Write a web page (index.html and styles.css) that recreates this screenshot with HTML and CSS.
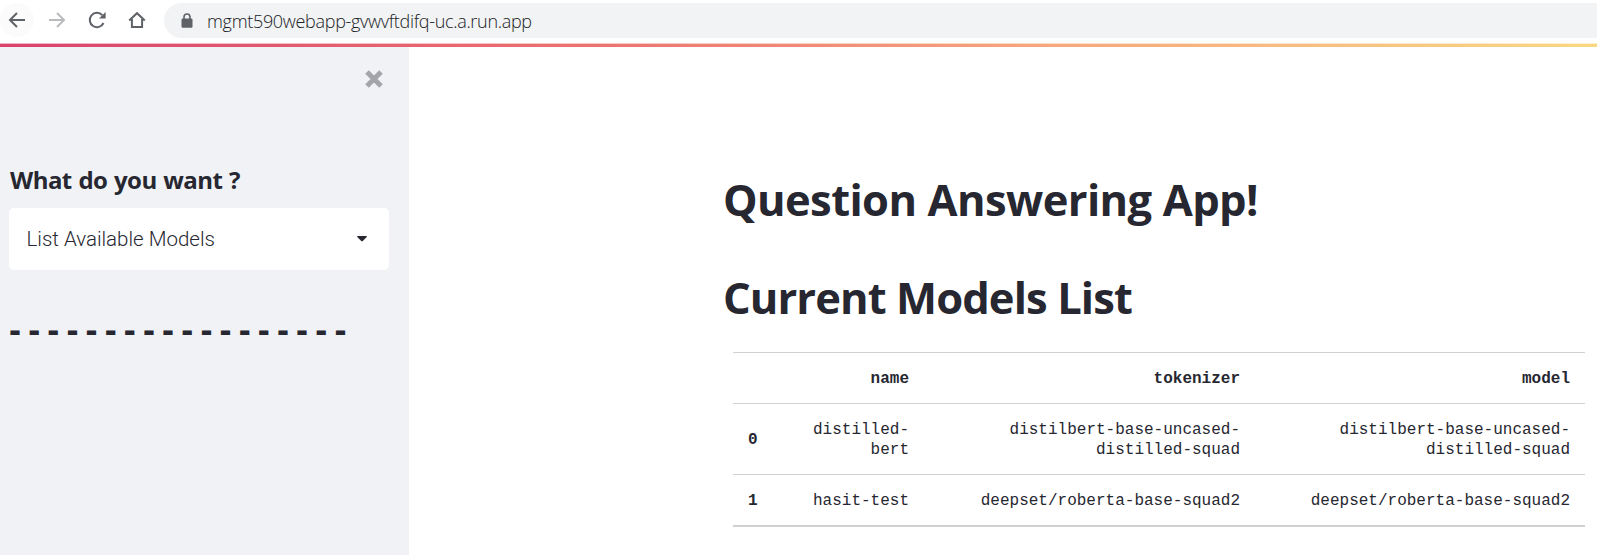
FILE: index.html
```html
<!DOCTYPE html>
<html lang="en">
<head>
<meta charset="utf-8">
<title>Question Answering App</title>
<link rel="stylesheet" href="styles.css">
</head>
<body>
<header class="toolbar">
  <nav class="nav">
    <span class="nav-button nav-button-hover"><svg width="20" height="20" viewBox="0 0 20 20"><path d="M18 10H3M10 3L3 10L10 17"/></svg></span>
    <span class="nav-button nav-button-disabled"><svg width="20" height="20" viewBox="0 0 20 20"><path d="M2 10H17M10 3L17 10L10 17"/></svg></span>
    <span class="nav-button"><svg width="20" height="20" viewBox="0 0 20 20"><path d="M16.5 13A7.2 7.2 0 1 1 15.3 5.1"/><path class="solid" d="M18.6 2V8.6H12z"/></svg></span>
    <span class="nav-button"><svg width="20" height="20" viewBox="0 0 20 20"><path d="M2.2 10.6L10 3.2L17.8 10.6M4.9 9V17.1H15.1V9"/></svg></span>
  </nav>
  <div class="address">
    <svg class="lock" width="12" height="16" viewBox="0 0 12 16"><rect x="0.5" y="5.5" width="11" height="9.2" rx="1.2"/><path d="M3 6V4a3 3 0 0 1 6 0V6"/></svg>
    <span class="url">mgmt590webapp-gvwvftdifq-uc.a.run.app</span>
  </div>
</header>
<div class="rainbow"></div>
<div class="page">
  <aside class="sidebar">
    <div class="close-row"><svg width="18" height="18" viewBox="0 0 18 18"><path d="M2 2L16 16M16 2L2 16"/></svg></div>
    <h2 class="question">What do you want ?</h2>
    <div class="select"><span class="select-value">List Available Models</span><svg width="10" height="6" viewBox="0 0 10 6"><path d="M0 0.8Q0 0 1 0H9Q10 0 10 0.8L6 4.8Q5 5.8 4 4.8Z"/></svg></div>
    <h2 class="dashes">- - - - - - - - - - - - - - - - - -</h2>
  </aside>
  <main class="content">
    <h1 class="title title-app">Question Answering App!</h1>
    <h1 class="title title-list">Current Models List</h1>
    <table class="models">
      <colgroup><col class="col-index"><col class="col-name"><col class="col-tokenizer"><col class="col-model"></colgroup>
      <thead><tr><th></th><th>name</th><th>tokenizer</th><th>model</th></tr></thead>
      <tbody>
        <tr><th>0</th><td>distilled-bert</td><td>distilbert-base-uncased-distilled-squad</td><td>distilbert-base-uncased-distilled-squad</td></tr>
        <tr><th>1</th><td>hasit-test</td><td>deepset/roberta-base-squad2</td><td>deepset/roberta-base-squad2</td></tr>
      </tbody>
    </table>
  </main>
</div>
</body>
</html>
```
FILE: styles.css
```css
* { box-sizing: border-box; }
body { margin: 0; height: 555px; overflow: hidden; background: #fff; color: #262730; font-family: Roboto, sans-serif; display: flex; flex-direction: column; }
svg { display: block; flex: none; }
.toolbar { height: 43px; flex: none; display: flex; padding-top: 3px; }
.nav { display: flex; gap: 6px; width: 164px; height: 34px; flex: none; }
.nav-button { width: 34px; height: 34px; flex: none; display: flex; align-items: center; justify-content: center; border-radius: 50%; }
.nav-button-hover { background: #fbfbfb; }
.nav-button path { fill: none; stroke: #5f6368; stroke-width: 2; }
.nav-button .solid { fill: #5f6368; stroke: none; }
.nav-button-disabled path { stroke: #babcbe; }
.address { flex: 1; height: 35px; background: #f1f3f4; border-radius: 18px 0 0 18px; display: flex; align-items: center; padding-left: 17px; gap: 14px; }
.lock rect { fill: #5f6368; }
.lock path { fill: none; stroke: #5f6368; stroke-width: 1.6; }
.url { font: 350 18px/24px "Open Sans", sans-serif; color: #202124; white-space: nowrap; letter-spacing: -0.31px; }
.rainbow { height: 4px; flex: none; border-top: 1px solid rgba(255, 255, 255, 0.6); background: linear-gradient(to right, #d9436e, #eb716f 36%, #f6a67e 65%, #f9d883) border-box; }
.page { flex: 1; display: flex; min-height: 0; }
.sidebar { width: 409px; flex: none; background: #f0f2f6; padding: 0 20px 0 9px; }
.close-row { display: flex; justify-content: flex-end; padding: 23px 6px 0 0; height: 116px; }
.close-row path { stroke: #a3a5ab; stroke-width: 5; fill: none; }
.question { margin: 0; height: 45px; font-family: "Open Sans", sans-serif; font-size: 24px; line-height: 34px; font-weight: 700; white-space: nowrap; padding-left: 1px; letter-spacing: -0.55px; word-spacing: 1px; }
.select { height: 62px; border-radius: 5px; background: #fff; display: flex; align-items: center; justify-content: space-between; padding: 0 22px 0 17.5px; font-size: 20.5px; font-weight: 300; }
.select svg { fill: #262730; }
.dashes { margin: 40px 0 0; font: 700 36px/40px "Liberation Sans", sans-serif; white-space: nowrap; word-spacing: -2.85px; }
.content { flex: 1; padding: 122px 12px 0 314px; }
.title { margin: 0; font-family: "Open Sans", sans-serif; font-size: 43.5px; line-height: 60px; font-weight: 700; white-space: nowrap; padding-top: 1px; }
.title-app { height: 98px; letter-spacing: -0.6px; word-spacing: 0.5px; }
.title-list { height: 85px; letter-spacing: -0.9px; }
.models { margin-left: 10px; width: 852px; table-layout: fixed; border-collapse: separate; border-spacing: 0; font: 16px/20px "Liberation Mono", monospace; border-bottom: 1px solid #d0d1d3; }
.col-index { width: 39px; }
.col-name { width: 152px; }
.col-tokenizer { width: 331px; }
.col-model { width: 330px; }
.models th, .models td { border-top: 1px solid #d0d1d3; text-align: right; padding: 16px 15px 14px; vertical-align: middle; }
.models tbody tr:last-child > * { border-bottom: 1px solid #d0d1d3; }
```
